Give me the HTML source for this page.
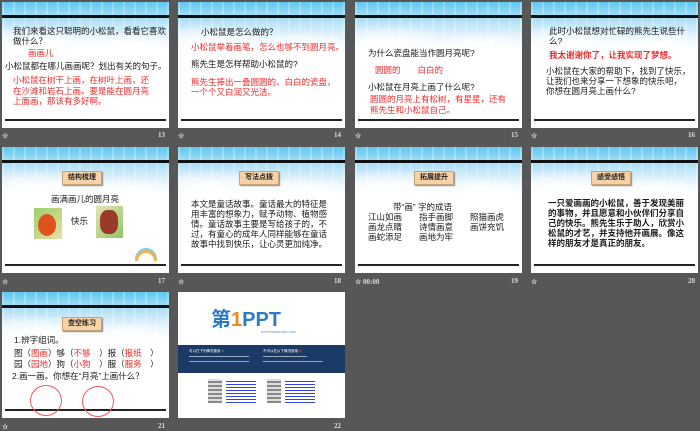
<!DOCTYPE html>
<html><head><meta charset="utf-8"><style>
*{margin:0;padding:0;box-sizing:border-box}
body{width:700px;height:431px;background:#575757;position:relative;overflow:hidden;font-family:"Liberation Sans","Noto Sans CJK SC",sans-serif}
.s{position:absolute;width:167px;height:126px;background:#fff;overflow:hidden}
.sky{position:absolute;left:0;top:0;width:100%;height:48px;
background:
 repeating-linear-gradient(90deg,rgba(255,255,255,.25) 0 2px,rgba(255,255,255,0) 2px 11px),
 linear-gradient(180deg,#5ec6ee 0,#8fd8f4 10px,#a9def5 16px,#cdeafa 26px,#eef8fd 38px,#fff 48px)}
.sky:after{content:"";position:absolute;left:0;top:16px;width:100%;height:32px;background:radial-gradient(ellipse 40% 60% at 20% 80%,#fff 0,rgba(255,255,255,0) 100%),radial-gradient(ellipse 30% 50% at 75% 90%,#fff 0,rgba(255,255,255,0) 100%)}
.tl{position:absolute;left:0;top:13px;width:100%;height:3px;background:#111}
.bl{position:absolute;left:3px;right:3px;top:117px;height:1.5px;background:#222}
.t{position:absolute;font-size:8.5px;line-height:10px;color:#1a1a1a;white-space:nowrap}
.r{color:#f02a2a}
.b{font-weight:bold}
.lab{position:absolute;font-size:7px;color:#ddd;font-family:"Liberation Serif",serif;font-weight:bold}
.tag{position:absolute;left:60px;top:24px;width:40px;height:14px;background:#f6d2a6;border:1px solid #c9a27a;box-shadow:1px 1px 1px #888;font-size:7px;font-weight:bold;text-align:center;line-height:12px;color:#222}
</style></head><body>

<div class="s" style="left:2px;top:2px"><div class="sky"></div><div class="tl"></div><div class="bl"></div>
<div class="t" style="left:11px;top:24px">我们来看这只聪明的小松鼠，看看它喜欢</div>
<div class="t" style="left:11px;top:34px">做什么？</div>
<div class="t r" style="left:26px;top:46px">画画儿</div>
<div class="t" style="left:3px;top:59px">小松鼠都在哪儿画画呢？划出有关的句子。</div>
<div class="t r" style="left:11px;top:73px">小松鼠在树干上画，在树叶上画，还</div>
<div class="t r" style="left:11px;top:84px">在沙滩和岩石上画。要是能在圆月亮</div>
<div class="t r" style="left:11px;top:94px">上面画，那该有多好啊。</div>
</div>
<div class="lab" style="left:2px;top:132px">☆</div><div class="lab" style="left:158px;top:131px">13</div>

<div class="s" style="left:178px;top:2px"><div class="sky"></div><div class="tl"></div><div class="bl"></div>
<div class="t" style="left:23px;top:25px">小松鼠是怎么做的？</div>
<div class="t r" style="left:13px;top:40px">小松鼠举着画笔，怎么也够不到圆月亮。</div>
<div class="t" style="left:13px;top:57px">熊先生是怎样帮助小松鼠的?</div>
<div class="t r" style="left:13px;top:75px">熊先生捧出一叠圆圆的、白白的瓷盘，</div>
<div class="t r" style="left:13px;top:85px">一个个又白润又光洁。</div>
</div>
<div class="lab" style="left:178px;top:132px">☆</div><div class="lab" style="left:334px;top:131px">14</div>

<div class="s" style="left:355px;top:2px"><div class="sky"></div><div class="tl"></div><div class="bl"></div>
<div class="t" style="left:13px;top:46px">为什么瓷盘能当作圆月亮呢?</div>
<div class="t r" style="left:20px;top:63px">圆圆的　　白白的</div>
<div class="t" style="left:13px;top:80px">小松鼠在月亮上画了什么呢?</div>
<div class="t r" style="left:15px;top:92px">圆圆的月亮上有松树，有星星，还有</div>
<div class="t r" style="left:15px;top:103px">熊先生和小松鼠自己。</div>
</div>
<div class="lab" style="left:355px;top:132px">☆</div><div class="lab" style="left:511px;top:131px">15</div>

<div class="s" style="left:531px;top:2px"><div class="sky"></div><div class="tl"></div><div class="bl"></div>
<div class="t" style="left:18px;top:24px">此时小松鼠想对忙碌的熊先生说些什</div>
<div class="t" style="left:18px;top:34px">么?</div>
<div class="t r b" style="left:18px;top:48px">我太谢谢你了，让我实现了梦想。</div>
<div class="t" style="left:15px;top:64px">小松鼠在大家的帮助下，找到了快乐，</div>
<div class="t" style="left:15px;top:74px">让我们也来分享一下想象的快乐吧，</div>
<div class="t" style="left:15px;top:84px">你想在圆月亮上画什么?</div>
</div>
<div class="lab" style="left:531px;top:132px">☆</div><div class="lab" style="left:688px;top:131px">16</div>

<div class="s" style="left:2px;top:147px"><div class="sky"></div><div class="tl"></div><div class="bl"></div>
<div class="tag">结构梳理</div>
<div class="t" style="left:49px;top:47px">画满画儿的圆月亮</div>
<div style="position:absolute;left:32px;top:61px;width:28px;height:31px;background:linear-gradient(135deg,#9bcf6c,#e6e0a0)"><div style="position:absolute;left:4px;top:6px;width:18px;height:22px;border-radius:50%;background:#e0521c"></div></div>
<div class="t" style="left:69px;top:69px">快乐</div>
<div style="position:absolute;left:94px;top:59px;width:27px;height:32px;background:linear-gradient(135deg,#e9e2b0,#8ec668)"><div style="position:absolute;left:4px;top:4px;width:18px;height:24px;border-radius:40%;background:#9b3a2a"></div></div>
<div style="position:absolute;left:133px;top:103px;width:22px;height:11px;border-radius:11px 11px 0 0;border:3px solid #f4b04a;border-bottom:none;box-shadow:0 -2px 0 #6cd0f0"></div>
</div>
<div class="lab" style="left:2px;top:278px">☆</div><div class="lab" style="left:158px;top:277px">17</div>

<div class="s" style="left:178px;top:147px"><div class="sky"></div><div class="tl"></div><div class="bl"></div>
<div class="tag" style="left:61px">写法点拨</div>
<div class="t" style="left:13px;top:52px">本文是童话故事。童话最大的特征是</div>
<div class="t" style="left:13px;top:62px">用丰富的想象力，赋予动物、植物感</div>
<div class="t" style="left:13px;top:72px">情。童话故事主要是写给孩子的，不</div>
<div class="t" style="left:13px;top:82px">过，有童心的成年人同样能够在童话</div>
<div class="t" style="left:13px;top:92px">故事中找到快乐，让心灵更加纯净。</div>
</div>
<div class="lab" style="left:178px;top:278px">☆</div><div class="lab" style="left:334px;top:277px">18</div>

<div class="s" style="left:355px;top:147px"><div class="sky"></div><div class="tl"></div><div class="bl"></div>
<div class="tag" style="left:59px">拓展提升</div>
<div class="t" style="left:38px;top:55px">带“画” 字的成语</div>
<div class="t" style="left:13px;top:65px">江山如画　　指手画脚　　照猫画虎</div>
<div class="t" style="left:13px;top:75px">画龙点睛　　诗情画意　　画饼充饥</div>
<div class="t" style="left:13px;top:85px">画蛇添足　　画地为牢</div>
</div>
<div class="lab" style="left:355px;top:278px">☆ 00:00</div><div class="lab" style="left:511px;top:277px">19</div>

<div class="s" style="left:531px;top:147px"><div class="sky"></div><div class="tl"></div><div class="bl"></div>
<div class="tag" style="left:60px">感受感悟</div>
<div class="t b" style="left:17px;top:51px">一只爱画画的小松鼠，善于发现美丽</div>
<div class="t b" style="left:17px;top:61px">的事物，并且愿意和小伙伴们分享自</div>
<div class="t b" style="left:17px;top:71px">己的快乐。熊先生乐于助人，欣赏小</div>
<div class="t b" style="left:17px;top:81px">松鼠的才艺，并支持他开画展。像这</div>
<div class="t b" style="left:17px;top:91px">样的朋友才是真正的朋友。</div>
</div>
<div class="lab" style="left:531px;top:278px">☆</div><div class="lab" style="left:688px;top:277px">20</div>

<div class="s" style="left:2px;top:292px"><div class="sky"></div><div class="tl"></div><div class="bl"></div>
<div class="tag" style="left:60px;top:25px">查空练习</div>
<div class="t" style="left:12px;top:43px">1.辨字组词。</div>
<div class="t" style="left:12px;top:56px">图（<span class="r">图画</span>）够（<span class="r">不够</span>　）报（<span class="r">报纸</span>　）</div>
<div class="t" style="left:12px;top:67px">园（<span class="r">园地</span>）狗（<span class="r">小狗</span>　）服（<span class="r">服务</span>　）</div>
<div class="t" style="left:10px;top:79px">2.画一画。你想在“月亮”上画什么？</div>
<div style="position:absolute;left:28px;top:93px;width:32px;height:31px;border:1px solid #f05a5a;border-radius:50%"></div>
<div style="position:absolute;left:80px;top:94px;width:32px;height:31px;border:1px solid #f05a5a;border-radius:50%"></div>
</div>
<div class="lab" style="left:2px;top:423px">☆</div><div class="lab" style="left:158px;top:422px">21</div>

<div class="s" style="left:178px;top:292px">
<div style="position:absolute;left:33px;top:17px;font-size:20px;font-weight:bold;color:#2d7bc4;line-height:22px;white-space:nowrap">第<span style="color:#f08a1c">1</span>PPT</div>
<div style="position:absolute;left:83px;top:38px;font-size:3px;color:#3a7bc4">HTTP://WWW.1PPT.COM</div>
<div style="position:absolute;left:0;top:53px;width:100%;height:28px;background:#1c3a66"></div>
<div style="position:absolute;left:11px;top:57px;font-size:3.5px;color:#fff">可以在下列情况使用 <span style="color:#6c6">✔</span></div>
<div style="position:absolute;left:85px;top:57px;font-size:3.5px;color:#fff">不可以在以下情况使用 <span style="color:#e33">✘</span></div>
<div style="position:absolute;left:11px;top:64px;width:60px;height:1px;background:#9ab"></div>
<div style="position:absolute;left:11px;top:69px;width:60px;height:1px;background:#9ab"></div>
<div style="position:absolute;left:85px;top:64px;width:44px;height:1px;background:#9ab"></div>
<div style="position:absolute;left:85px;top:69px;width:60px;height:1px;background:#9ab"></div>
<div style="position:absolute;left:30px;top:87px;width:14px;height:24px;background:repeating-linear-gradient(0deg,#888 0 2px,#ddd 2px 4px)"></div>
<div style="position:absolute;left:48px;top:87px;width:30px;height:24px;background:repeating-linear-gradient(0deg,#3344dd 0 1px,#fff 1px 3px)"></div>
<div style="position:absolute;left:89px;top:87px;width:14px;height:24px;background:repeating-linear-gradient(0deg,#888 0 2px,#ddd 2px 4px)"></div>
<div style="position:absolute;left:107px;top:87px;width:30px;height:24px;background:repeating-linear-gradient(0deg,#3344dd 0 1px,#fff 1px 3px)"></div>
</div>
<div class="lab" style="left:334px;top:422px">22</div>

</body></html>
